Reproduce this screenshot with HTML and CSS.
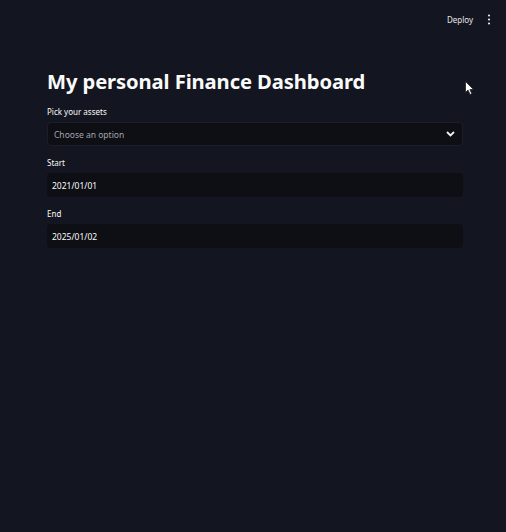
FILE: index.html
```html
<!DOCTYPE html>
<html>
<head>
<meta charset="utf-8">
<link rel="stylesheet" href="styles.css">
</head>
<body>
<header class="toolbar">
  <span class="deploy">Deploy</span>
  <svg class="menu" width="4" height="11" viewBox="0 0 4 11"><circle cx="2" cy="1.5" r="1.1" fill="#e6e6ea"/><circle cx="2" cy="5.5" r="1.1" fill="#e6e6ea"/><circle cx="2" cy="9.5" r="1.1" fill="#e6e6ea"/></svg>
</header>
<main class="main">
  <h1 class="title">My personal Finance Dashboard</h1>
  <div class="field">
    <label class="label">Pick your assets</label>
    <div class="input select">
      <span class="placeholder">Choose an option</span>
      <svg class="chev" width="9" height="6" viewBox="0 0 9 6"><path d="M1 1 L4.5 4.5 L8 1" stroke="#f0f0f4" stroke-width="1.8" fill="none"/></svg>
    </div>
  </div>
  <div class="field">
    <label class="label">Start</label>
    <div class="input date">2021/01/01</div>
  </div>
  <div class="field">
    <label class="label">End</label>
    <div class="input date">2025/01/02</div>
  </div>
</main>
<svg class="cursor" width="10" height="15" viewBox="0 0 10 15"><path d="M0.5 0.5 L0.5 11.5 L3 9 L5 13.5 L6.8 12.7 L4.9 8.5 L8.5 8.5 Z" fill="#fff" stroke="#222" stroke-width="0.8"/></svg>
</body>
</html>
```
FILE: styles.css
```css
html, body {
  margin: 0;
  padding: 0;
  background: #131620;
  color: #fafafa;
  font-family: "Noto Sans", "Open Sans", sans-serif;
  width: 506px;
  height: 532px;
  overflow: hidden;
  position: relative;
}
.toolbar {
  height: 38px;
  display: flex;
  justify-content: flex-end;
  align-items: center;
  padding-right: 15px;
  gap: 14px;
}
.deploy {
  font-size: 8px;
  color: #e6e6ea;
}
.menu { display: block; }
.main {
  padding: 28px 43px 0 47px;
}
.title {
  margin: 0;
  font-size: 20.2px;
  font-weight: 700;
  line-height: 30px;
  letter-spacing: -0.1px;
}
.field {
  display: flex;
  flex-direction: column;
  margin-top: 9px;
}
.field + .field { margin-top: 10px; }
.label {
  font-size: 8px;
  line-height: 13px;
  margin-bottom: 4px;
  color: #fafafa;
}
.input {
  height: 24px;
  background: #0d0f15;
  border-radius: 4px;
  display: flex;
  align-items: center;
  font-size: 8.5px;
}
.select {
  padding: 0 7px 0 6px;
  justify-content: space-between;
  border: 1px solid #1b1e27;
  height: 22px;
}
.placeholder { color: #a3a5ad; }
.date {
  padding-left: 5px;
  color: #fafafa;
}
.cursor {
  position: absolute;
  left: 465px;
  top: 81px;
}
```
